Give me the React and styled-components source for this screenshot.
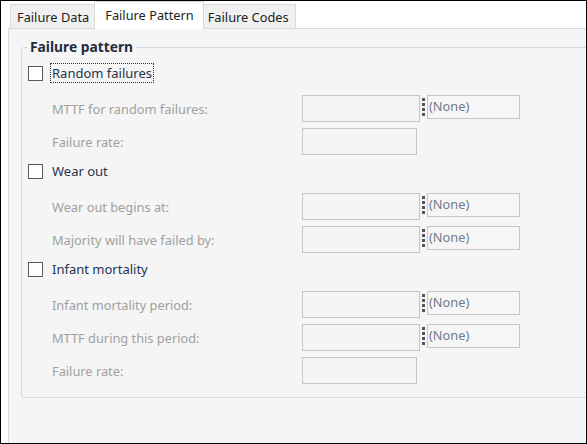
import React from 'react';
import styled, { createGlobalStyle } from 'styled-components';

const GlobalStyle = createGlobalStyle`
  html, body {
    margin: 0;
    padding: 0;
    background: #ffffff;
  }
  body {
    font-family: 'Noto Sans', 'Open Sans', sans-serif;
    font-size: 12.8px;
  }
`;

const Frame = styled.div`
  width: 587px;
  height: 444px;
  box-sizing: border-box;
  border: 1px solid #000000;
  background: #ffffff;
  overflow: hidden;
  display: flex;
  flex-direction: column;
`;

const TabStrip = styled.div`
  height: 27px;
  display: flex;
  align-items: flex-end;
  padding-left: 10px;
  flex: none;
`;

const Tab = styled.div`
  position: relative;
  box-sizing: border-box;
  height: ${(p) => (p.$active ? '28px' : '24px')};
  margin: ${(p) => (p.$active ? '0 -2px -1px -2px' : '0 0 0 -1px')};
  padding: ${(p) => (p.$active ? '0 9px 2px 10px' : '0 6px')};
  z-index: ${(p) => (p.$active ? 2 : 1)};
  display: flex;
  align-items: center;
  border: 1px solid #d9d9d9;
  border-bottom: none;
  background: ${(p) => (p.$active ? '#ffffff' : '#f0f0f0')};
  color: #1e1e1e;
  white-space: nowrap;
`;

const Panel = styled.div`
  flex: 1;
  margin-left: 7px;
  border-top: 1px solid #d9d9d9;
  border-left: 1px solid #d9d9d9;
  background: #f5f5f5;
  overflow: hidden;
  padding-top: 10px;
`;

const GroupBox = styled.fieldset`
  margin: 0 -40px 0 12px;
  padding: 6px 6px 9px 6px;
  border: 1px solid #d6dae0;
  border-radius: 3px;
  display: flex;
  flex-direction: column;
`;

const GroupTitle = styled.legend`
  padding: 0 3px 0 2px;
  line-height: 16px;
  font-weight: bold;
  font-size: 13.8px;
  color: #1f2c3d;
`;

const CheckRow = styled.div`
  height: 24px;
  display: flex;
  align-items: center;
  margin-bottom: 10px;
`;

const Box = styled.span`
  width: 13px;
  height: 13px;
  border: 1px solid #555a60;
  background: #ffffff;
  flex: none;
`;

const CheckLabel = styled.span`
  margin-left: 8px;
  padding: 0 1px;
  height: 18px;
  line-height: 18px;
  box-sizing: border-box;
  font-size: 13px;
  color: #1f3350;
  outline: ${(p) => (p.$focused ? '1px dotted #333' : 'none')};
`;

const FieldRow = styled.div`
  display: grid;
  grid-template-columns: 250px 118px 7px 93px;
  justify-content: start;
  align-items: center;
  padding-left: 24px;
  margin-bottom: ${(p) => (p.$last ? '4px' : '6px')};
`;

const FieldLabel = styled.span`
  color: #a0a0a0;
`;

const Input = styled.div`
  width: ${(p) => (p.$narrow ? '115px' : '118px')};
  height: 27px;
  box-sizing: border-box;
  border: 1px solid #c6c6c6;
  background: #f4f4f4;
`;

const Dots = styled.svg`
  align-self: start;
  margin-top: 3px;
  justify-self: center;
`;

const UnitBox = styled.div`
  align-self: start;
  width: 93px;
  height: 24px;
  box-sizing: border-box;
  border: 1px solid #c6c6c6;
  background: #f6f6f6;
  color: #6f7b8c;
  padding-left: 1px;
  line-height: 20px;
`;

const groups = [
  {
    title: 'Random failures',
    focused: true,
    fields: [
      { label: 'MTTF for random failures:', unit: true },
      { label: 'Failure rate:', unit: false },
    ],
  },
  {
    title: 'Wear out',
    fields: [
      { label: 'Wear out begins at:', unit: true },
      { label: 'Majority will have failed by:', unit: true },
    ],
  },
  {
    title: 'Infant mortality',
    fields: [
      { label: 'Infant mortality period:', unit: true },
      { label: 'MTTF during this period:', unit: true },
      { label: 'Failure rate:', unit: false },
    ],
  },
];

function Field({ label, unit, last }) {
  return (
    <FieldRow $last={last}>
      <FieldLabel>{label}</FieldLabel>
      <Input $narrow={!unit} />
      {unit && (
        <Dots width="3" height="19" viewBox="0 0 3 19">
          {[0, 5, 10, 15].map((y) => (
            <rect key={y} x="0" y={y} width="3" height="3" fill="#55595e" />
          ))}
        </Dots>
      )}
      {unit && <UnitBox>(None)</UnitBox>}
    </FieldRow>
  );
}

export default function App() {
  return (
    <>
      <GlobalStyle />
      <Frame>
        <TabStrip>
          <Tab>Failure Data</Tab>
          <Tab $active>Failure Pattern</Tab>
          <Tab>Failure Codes</Tab>
        </TabStrip>
        <Panel>
          <GroupBox>
            <GroupTitle>Failure pattern</GroupTitle>
            {groups.map((g) => (
              <React.Fragment key={g.title}>
                <CheckRow>
                  <Box />
                  <CheckLabel $focused={g.focused}>{g.title}</CheckLabel>
                </CheckRow>
                {g.fields.map((f, i) => (
                  <Field key={f.label + i} {...f} last={i === g.fields.length - 1} />
                ))}
              </React.Fragment>
            ))}
          </GroupBox>
        </Panel>
      </Frame>
    </>
  );
}
